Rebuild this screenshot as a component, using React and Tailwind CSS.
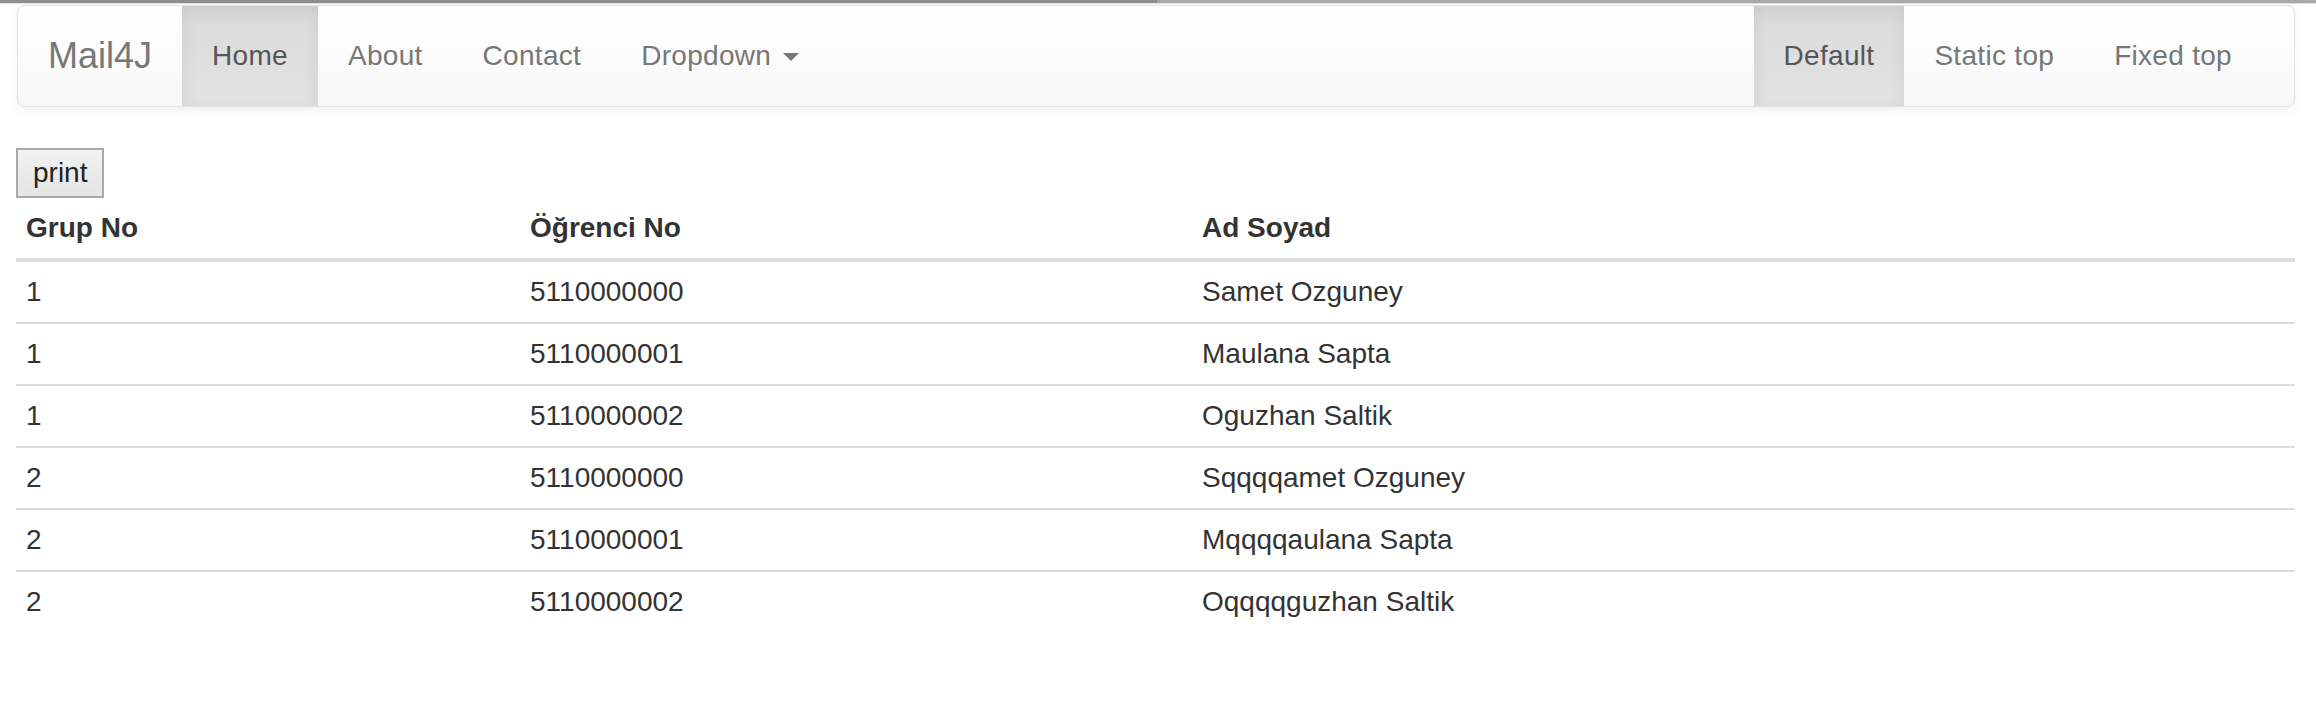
import React from 'react';

const rows = [
    { group: '1', no: '5110000000', name: 'Samet Ozguney' },
    { group: '1', no: '5110000001', name: 'Maulana Sapta' },
    { group: '1', no: '5110000002', name: 'Oguzhan Saltik' },
    { group: '2', no: '5110000000', name: 'Sqqqqamet Ozguney' },
    { group: '2', no: '5110000001', name: 'Mqqqqaulana Sapta' },
    { group: '2', no: '5110000002', name: 'Oqqqqguzhan Saltik' },
];

const NavLink = ({ label, active, children }) => (
    <a
        href="#"
        className={`flex items-center h-[100px] px-[30px] text-[28px] leading-[40px] tracking-[0.3px] ${active
            ? 'bg-linear-to-b from-[#dbdbdb] to-[#e2e2e2] text-[#555] shadow-[inset_0_6px_18px_rgba(0,0,0,0.075)]'
            : 'text-[#777]'
            }`}
    >
        {label}
        {children}
    </a>
);

const App = () => {
    return (
        <div className="min-h-screen bg-white text-[#333] font-['Liberation_Sans',Arial,sans-serif]">
            {/* browser loading strip */}
            <div className="flex h-[3px]">
                <div className="w-[1157px] bg-[#8e8e8e]"></div>
                <div className="flex-1 bg-[#a8a8a8]"></div>
            </div>
            <div className="h-[1px] bg-[#e4e4e4]"></div>

            <div className="pl-[17px] pr-[21px] pt-[1px]">
                {/* Navbar */}
                <nav className="flex justify-between h-[102px] border border-[#e3e3e3] rounded-[8px] bg-linear-to-b from-white to-[#f8f8f8] shadow-[0_2px_10px_rgba(0,0,0,0.075)] overflow-hidden">
                    <div className="flex">
                        <a href="#" className="flex items-center h-[100px] px-[30px] text-[36px] leading-[40px] text-[#777]">
                            Mail4J
                        </a>
                        <NavLink label="Home" active />
                        <NavLink label="About" />
                        <NavLink label="Contact" />
                        <NavLink label="Dropdown">
                            <span className="ml-[12px] mt-[2px] w-0 h-0 border-t-[8px] border-t-[#777] border-x-[8px] border-x-transparent"></span>
                        </NavLink>
                    </div>
                    <div className="flex pr-[32px]">
                        <NavLink label="Default" active />
                        <NavLink label="Static top" />
                        <NavLink label="Fixed top" />
                    </div>
                </nav>
            </div>

            <main className="pl-[16px] pr-[21px]">
                <button className="mt-[41px] h-[50px] px-[15px] border-2 border-[#a9a9a9] bg-linear-to-b from-[#f2f2f2] to-[#e4e4e4] text-[28px] leading-[40px] text-[#222]">
                    print
                </button>

                {/* Group table */}
                <table className="w-full border-collapse text-[28px] leading-[40px]">
                    <thead>
                        <tr>
                            <th className="w-[504px] p-[10px] text-left font-bold border-b-4 border-[#ddd]">Grup No</th>
                            <th className="w-[672px] p-[10px] text-left font-bold border-b-4 border-[#ddd]">Öğrenci No</th>
                            <th className="p-[10px] text-left font-bold border-b-4 border-[#ddd]">Ad Soyad</th>
                        </tr>
                    </thead>
                    <tbody>
                        {rows.map((row, i) => (
                            <tr key={i}>
                                <td className="p-[10px] border-t-2 border-[#ddd]">{row.group}</td>
                                <td className="p-[10px] border-t-2 border-[#ddd]">{row.no}</td>
                                <td className="p-[10px] border-t-2 border-[#ddd]">{row.name}</td>
                            </tr>
                        ))}
                    </tbody>
                </table>
            </main>
        </div>
    );
};

export default App;
